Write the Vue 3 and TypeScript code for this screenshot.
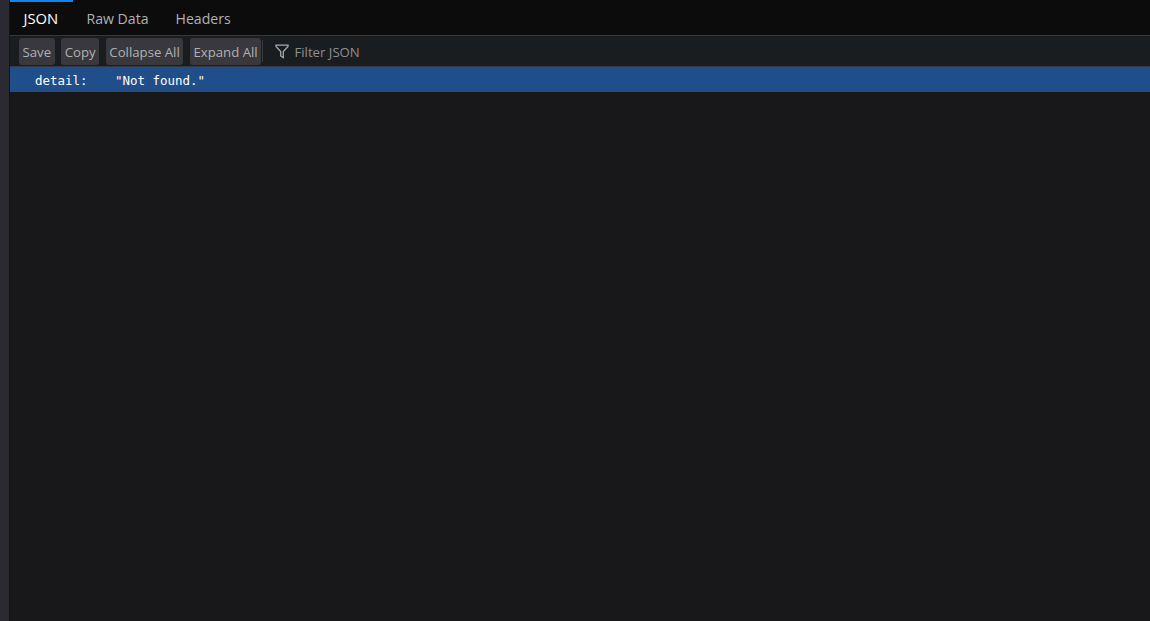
<script setup lang="ts">
const tabs: string[] = ['JSON', 'Raw Data', 'Headers']
const actions: string[] = ['Save', 'Copy', 'Collapse All', 'Expand All']
</script>

<template>
  <div class="page">
    <aside class="strip"></aside>
    <main class="viewer">
      <nav class="tabs">
        <div v-for="(t, i) in tabs" :key="t" class="tab" :class="{ active: i === 0 }">{{ t }}</div>
      </nav>
      <div class="toolbar">
        <button v-for="a in actions" :key="a" class="btn">{{ a }}</button>
        <div class="sep"></div>
        <div class="filter">
          <svg width="14" height="15" viewBox="0 0 14 15" fill="none" stroke="#a8a8aa" stroke-width="1.3">
            <path d="M1 1.2h12v1.3L8.3 7.6v6L5.7 12V7.6L1 2.5z" />
          </svg>
          <span>Filter JSON</span>
        </div>
      </div>
      <div class="row">
        <span class="key">detail:</span>
        <span class="val">"Not found."</span>
      </div>
    </main>
  </div>
</template>

<style>
html, body { margin: 0; background: #18181a; }
</style>

<style scoped>
.page { display: flex; height: 621px; width: 1150px; overflow: hidden; font-family: "Open Sans", "Noto Sans", sans-serif; }
.strip { width: 9px; background: #2b2a33; border-right: 1px solid #141417; flex: none; }
.viewer { flex: 1; min-width: 0; background: #18181a; display: flex; flex-direction: column; }
.tabs { display: flex; height: 36px; background: #0c0c0d; border-bottom: 1px solid #38383d; flex: none; box-sizing: border-box; }
.tab { padding: 0 13.5px; font-size: 14.1px; color: #b1b1b3; border-top: 2px solid transparent; box-sizing: border-box; height: 35px; line-height: 33px; }
.tab.active { color: #fff; border-top-color: #0a84ff; width: 63px; font-size: 14.8px; }
.toolbar { display: flex; align-items: center; height: 30px; padding-left: 9px; gap: 6.7px; background: #1a1d20; border-bottom: 1px solid #38383d; flex: none; }
.btn { height: 27px; padding: 3px 3.5px 0; border: none; border-radius: 3px; background: #38383d; color: #b1b1b3; font: inherit; font-size: 13.2px; line-height: 1; }
.sep { width: 1px; height: 22px; background: #38383d; margin-left: -6px; margin-right: -1px; }
.filter { display: flex; align-items: center; gap: 5.5px; margin-left: 6.4px; color: #8f8f92; font-size: 13.2px; padding-top: 2px; }
.filter svg { margin-top: -2px; }
.row { display: flex; height: 25px; align-items: center; background: #204e8a; color: #fff; font-family: "DejaVu Sans Mono", monospace; font-size: 12.46px; padding: 1px 0 0 25px; box-sizing: border-box; flex: none; }
.key { width: 80px; }
</style>
